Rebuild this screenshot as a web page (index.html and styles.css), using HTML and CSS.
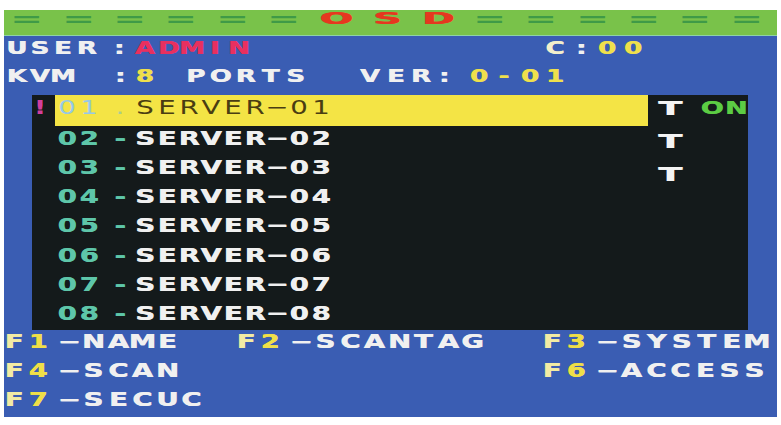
FILE: index.html
```html
<!DOCTYPE html>
<html>
<head>
<meta charset="utf-8">
<link rel="stylesheet" href="styles.css">
</head>
<body>
<div class="scr">
  <div class="ttl">
    <span class="eq">=</span><span class="eq">=</span><span class="eq">=</span><span class="eq">=</span><span class="eq">=</span><span class="eq">=</span><span class="osd">O</span><span class="osd">S</span><span class="osd">D</span><span class="eq">=</span><span class="eq">=</span><span class="eq">=</span><span class="eq">=</span><span class="eq">=</span><span class="eq">=</span>
  </div>

  <div class="ln l1">
    <div class="sg c233 a1"><span>U</span><span>S</span><span>E</span><span>R</span></div>
    <div class="sg c12 a2"><span>:</span></div>
    <div class="sg c233 a3 pink"><span>A</span><span>D</span><span>M</span><span>I</span><span>N</span></div>
    <div class="sg c255 a4 cream"><span>C</span></div>
    <div class="sg c12 a5"><span>:</span></div>
    <div class="sg c255 a5 yel"><span>0</span><span>0</span></div>
  </div>

  <div class="ln l2">
    <div class="sg c233 a1"><span>K</span><span>V</span><span>M</span></div>
    <div class="sg c12 b2"><span>:</span></div>
    <div class="sg c233 b3 yel"><span>8</span></div>
    <div class="sg c25 b4"><span>P</span><span>O</span><span>R</span><span>T</span><span>S</span></div>
    <div class="sg c255 b5"><span>V</span><span>E</span><span>R</span></div>
    <div class="sg c12 b6"><span>:</span></div>
    <div class="sg c255 b7 yel"><span>0</span><span>-</span><span>0</span><span>1</span></div>
  </div>

  <div class="pnl">
    <div class="lst">
      <div class="row sel">
        <div class="mk"><span>!</span></div>
        <div class="it">
          <div class="sg c22 r1 num"><span>0</span><span>1</span></div>
          <div class="sg c12 r2 sep"><span>.</span></div>
          <div class="sg c22 r3 nm"><span>S</span><span>E</span><span>R</span><span>V</span><span>E</span><span>R</span><span>−</span><span>0</span><span>1</span></div>
        </div>
      </div>
      <div class="row">
        <div class="mk"></div>
        <div class="it">
          <div class="sg c22 r1 num"><span>0</span><span>2</span></div>
          <div class="sg c12 r2 sep"><span>-</span></div>
          <div class="sg c22 r3 nm"><span>S</span><span>E</span><span>R</span><span>V</span><span>E</span><span>R</span><span>−</span><span>0</span><span>2</span></div>
        </div>
      </div>
      <div class="row">
        <div class="mk"></div>
        <div class="it">
          <div class="sg c22 r1 num"><span>0</span><span>3</span></div>
          <div class="sg c12 r2 sep"><span>-</span></div>
          <div class="sg c22 r3 nm"><span>S</span><span>E</span><span>R</span><span>V</span><span>E</span><span>R</span><span>−</span><span>0</span><span>3</span></div>
        </div>
      </div>
      <div class="row">
        <div class="mk"></div>
        <div class="it">
          <div class="sg c22 r1 num"><span>0</span><span>4</span></div>
          <div class="sg c12 r2 sep"><span>-</span></div>
          <div class="sg c22 r3 nm"><span>S</span><span>E</span><span>R</span><span>V</span><span>E</span><span>R</span><span>−</span><span>0</span><span>4</span></div>
        </div>
      </div>
      <div class="row">
        <div class="mk"></div>
        <div class="it">
          <div class="sg c22 r1 num"><span>0</span><span>5</span></div>
          <div class="sg c12 r2 sep"><span>-</span></div>
          <div class="sg c22 r3 nm"><span>S</span><span>E</span><span>R</span><span>V</span><span>E</span><span>R</span><span>−</span><span>0</span><span>5</span></div>
        </div>
      </div>
      <div class="row">
        <div class="mk"></div>
        <div class="it">
          <div class="sg c22 r1 num"><span>0</span><span>6</span></div>
          <div class="sg c12 r2 sep"><span>-</span></div>
          <div class="sg c22 r3 nm"><span>S</span><span>E</span><span>R</span><span>V</span><span>E</span><span>R</span><span>−</span><span>0</span><span>6</span></div>
        </div>
      </div>
      <div class="row">
        <div class="mk"></div>
        <div class="it">
          <div class="sg c22 r1 num"><span>0</span><span>7</span></div>
          <div class="sg c12 r2 sep"><span>-</span></div>
          <div class="sg c22 r3 nm"><span>S</span><span>E</span><span>R</span><span>V</span><span>E</span><span>R</span><span>−</span><span>0</span><span>7</span></div>
        </div>
      </div>
      <div class="row">
        <div class="mk"></div>
        <div class="it">
          <div class="sg c22 r1 num"><span>0</span><span>8</span></div>
          <div class="sg c12 r2 sep"><span>-</span></div>
          <div class="sg c22 r3 nm"><span>S</span><span>E</span><span>R</span><span>V</span><span>E</span><span>R</span><span>−</span><span>0</span><span>8</span></div>
        </div>
      </div>
    </div>
    <div class="tcol">
      <div class="trow">
        <div class="sg c24 tt"><span>T</span></div>
        <div class="sg c24 on"><span>O</span><span>N</span></div>
      </div>
      <div class="trow"><div class="sg c24 tt"><span>T</span></div></div>
      <div class="trow"><div class="sg c24 tt"><span>T</span></div></div>
    </div>
  </div>

  <div class="ln fl">
    <div class="sg c24 f0"><span class="fk">F</span><span class="fd">1</span></div>
    <div class="sg c24 fdash"><span>−</span></div>
    <div class="sg c245"><span>N</span><span>A</span><span>M</span><span>E</span></div>
    <div class="sg c24 f2"><span class="fk">F</span><span class="fd">2</span></div>
    <div class="sg c24 fdash"><span>−</span></div>
    <div class="sg c245"><span>S</span><span>C</span><span>A</span><span>N</span><span>T</span><span>A</span><span>G</span></div>
    <div class="sg c24 f3"><span class="fk">F</span><span class="fd">3</span></div>
    <div class="sg c24 fdash"><span>−</span></div>
    <div class="sg c25"><span>S</span><span>Y</span><span>S</span><span>T</span><span>E</span><span>M</span></div>
  </div>
  <div class="ln fl">
    <div class="sg c24 f0"><span class="fk">F</span><span class="fd">4</span></div>
    <div class="sg c24 fdash"><span>−</span></div>
    <div class="sg c245"><span>S</span><span>C</span><span>A</span><span>N</span></div>
    <div class="sg c24 f6"><span class="fk">F</span><span class="fd">6</span></div>
    <div class="sg c24 fdash"><span>−</span></div>
    <div class="sg c245"><span>A</span><span>C</span><span>C</span><span>E</span><span>S</span><span>S</span></div>
  </div>
  <div class="ln fl">
    <div class="sg c24 f0"><span class="fk">F</span><span class="fd">7</span></div>
    <div class="sg c24 fdash"><span>−</span></div>
    <div class="sg c245"><span>S</span><span>E</span><span>C</span><span>U</span><span>C</span></div>
  </div>
</div>
</body>
</html>
```

FILE: styles.css
```css
* { box-sizing: border-box; }

html, body {
  margin: 0;
  padding: 0;
  background: #ffffff;
}

body {
  font-family: "DejaVu Sans", "Verdana", sans-serif;
  font-weight: bold;
  color: #f0f0f0;
}

.scr {
  margin: 10px 4px 0 4px;
  width: 773px;
  height: 407px;
  background: #3a5db3;
  overflow: hidden;
}

/* title bar */
.ttl {
  height: 26px;
  background: #79c24a;
  border-bottom: 1px solid #8ed3a6;
  display: flex;
  align-items: flex-start;
}

.ttl span {
  display: block;
  flex: none;
  width: 51.4px;
  text-align: center;
  line-height: 1;
}

.ttl span:first-child { margin-left: -2.7px; }

.eq {
  margin-top: 2.2px;
  font-weight: bold;
  font-size: 14px;
  color: #3f9a47;
  transform: scale(2.8, 1.4);
}

.osd {
  margin-top: 1.5px;
  font-size: 15px;
  color: #e5381f;
  text-shadow: 0.6px 0 0 #e5381f;
  transform: scaleX(2.6);
}

/* generic text lines */
.ln {
  display: flex;
  align-items: center;
}

.sg {
  display: flex;
  flex: none;
}

.sg span {
  display: block;
  flex: none;
  text-align: center;
  line-height: 1;
  text-shadow: 0.5px 0 0 currentColor;
}

.c12 span { width: 12px; }
.c22 span { width: 22.06px; }
.c233 span { width: 23.3px; }
.c24 span { width: 24px; }
.c245 span { width: 24.5px; }
.c25 span { width: 25px; }
.c255 span { width: 25.5px; }

.l1 {
  height: 25px;
  padding-bottom: 1px;
  font-size: 18px;
}

.l2 {
  height: 34px;
  padding-bottom: 4px;
  font-size: 18px;
}

.l1 span, .l2 span { transform: scaleX(1.45); }

.a1 { margin-left: 0.85px; }
.a2 { margin-left: 15.45px; }
.a3 { margin-left: 7.85px; }
.a4 { margin-left: 292.4px; }
.a5 { margin-left: 7.25px; }

.b2 { margin-left: 39.75px; }
.b3 { margin-left: 6.85px; }
.b4 { margin-left: 26.85px; }
.b5 { margin-left: 48.75px; }
.b6 { margin-left: 4.25px; }
.b7 { margin-left: 15.75px; }

.pink { color: #e8305f; }
.cream { color: #f3efcc; }
.yel { color: #efe04c; }

/* server panel */
.pnl {
  margin-left: 28px;
  width: 716px;
  height: 235px;
  background: #141a1b;
  display: flex;
}

.lst {
  width: 616px;
  display: flex;
  flex-direction: column;
}

.row {
  height: 29.14px;
  display: flex;
  font-size: 20px;
}

.row.sel { height: 31px; }

.mk {
  width: 23px;
  padding-top: 2px;
  padding-left: 1.5px;
  display: flex;
  align-items: flex-start;
  color: #d23f9e;
}

.mk span {
  width: 12px;
  text-align: center;
  line-height: 1;
  transform: scaleX(1.3);
}

.it {
  width: 593px;
  display: flex;
  align-items: flex-start;
  padding-top: 2px;
}

.sel .it { background: #f4e445; }

.row span { transform: scaleX(1.38); }

.r1 { margin-left: 0.5px; }
.r2 { margin-left: 14.5px; }
.r3 { margin-left: 7.97px; }

.num { color: #5ec6a9; }
.sep { color: #5ec6a9; }
.nm { color: #f0f0f0; }

.sel .num { color: #97c9e6; font-weight: normal; }
.sel .sep { color: #a9cd90; font-weight: normal; }
.sel .nm { color: #4a3d12; font-weight: normal; }
.sel .it span { text-shadow: none; }

.tcol {
  width: 100px;
  display: flex;
  flex-direction: column;
  padding-left: 10px;
}

.trow {
  height: 33px;
  display: flex;
  align-items: center;
  padding-bottom: 8px;
}

.tt {
  font-size: 20px;
  color: #f4f4f4;
}

.tt span { transform: scaleX(1.75); }

.on {
  margin-left: 18px;
  font-size: 18px;
  color: #5ccc44;
}

.on span { transform: scaleX(1.5); }

/* function key lines */
.fl {
  height: 29px;
  padding-bottom: 6px;
  font-size: 19px;
}

.fl span { transform: scaleX(1.45); }

.fk { color: #f3eba4; }
.fd { color: #efdf48; }

.f0 { margin-left: -2px; }
.f2 { margin-left: 55px; }
.f3 { margin-left: 55.5px; }
.f6 { margin-left: 361px; }
.fdash { margin-left: 7px; }
```
